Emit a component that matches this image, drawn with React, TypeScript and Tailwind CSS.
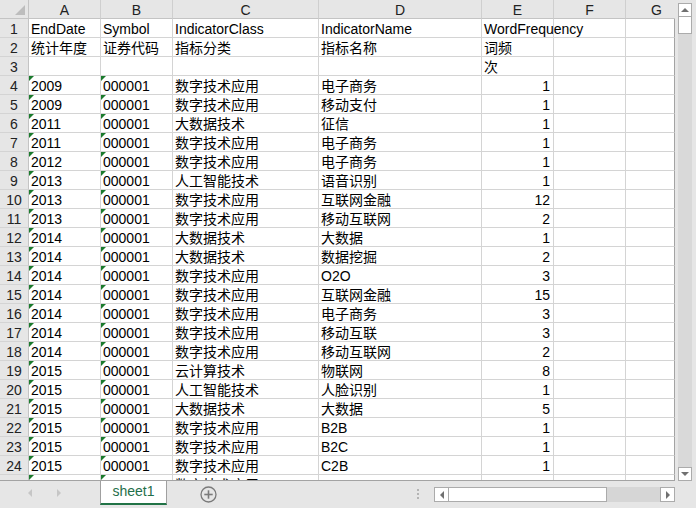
import React from "react";

type Row = [string, string, string, string, string];

const rows: Row[] = [
  ["EndDate", "Symbol", "IndicatorClass", "IndicatorName", "WordFrequency"],
  ["统计年度", "证券代码", "指标分类", "指标名称", "词频"],
  ["", "", "", "", "次"],
  ["2009", "000001", "数字技术应用", "电子商务", "1"],
  ["2009", "000001", "数字技术应用", "移动支付", "1"],
  ["2011", "000001", "大数据技术", "征信", "1"],
  ["2011", "000001", "数字技术应用", "电子商务", "1"],
  ["2012", "000001", "数字技术应用", "电子商务", "1"],
  ["2013", "000001", "人工智能技术", "语音识别", "1"],
  ["2013", "000001", "数字技术应用", "互联网金融", "12"],
  ["2013", "000001", "数字技术应用", "移动互联网", "2"],
  ["2014", "000001", "大数据技术", "大数据", "1"],
  ["2014", "000001", "大数据技术", "数据挖掘", "2"],
  ["2014", "000001", "数字技术应用", "O2O", "3"],
  ["2014", "000001", "数字技术应用", "互联网金融", "15"],
  ["2014", "000001", "数字技术应用", "电子商务", "3"],
  ["2014", "000001", "数字技术应用", "移动互联", "3"],
  ["2014", "000001", "数字技术应用", "移动互联网", "2"],
  ["2015", "000001", "云计算技术", "物联网", "8"],
  ["2015", "000001", "人工智能技术", "人脸识别", "1"],
  ["2015", "000001", "大数据技术", "大数据", "5"],
  ["2015", "000001", "数字技术应用", "B2B", "1"],
  ["2015", "000001", "数字技术应用", "B2C", "1"],
  ["2015", "000001", "数字技术应用", "C2B", "1"],
  ["2015", "000001", "数字技术应用", "C2C", "1"],
];

const colW = [
  "w-[72px]",
  "w-[72px]",
  "w-[146px]",
  "w-[163px]",
  "w-[72px]",
  "w-[72px]",
  "w-[49px]",
];
const letters = ["A", "B", "C", "D", "E", "F", "G"];

function Tri() {
  return (
    <span className="absolute left-0 top-0 h-0 w-0 border-t-[5px] border-r-[5px] border-t-[#1a7a2c] border-r-transparent" />
  );
}

function HeaderRow() {
  return (
    <div className="flex h-[19px] shrink-0">
      <div className="flex h-[19px] w-[29px] shrink-0 items-end justify-end border-r border-b border-r-[#c4c4c4] border-b-[#c4c4c4] bg-[#e6e6e6] pr-[3px] pb-[3px]">
        <svg width="10" height="10" viewBox="0 0 10 10">
          <polygon points="0,10 10,10 10,0" fill="#bdbdbd" />
        </svg>
      </div>
      {letters.map((l, i) => (
        <div
          key={l}
          className={`${colW[i]} h-[19px] shrink-0 border-b border-b-[#c4c4c4] bg-[#e6e6e6] pt-[2px] text-center leading-[17px] text-[#222] ${
            i === 6 ? "border-r-0 pl-[12px]" : "border-r border-r-[#cfcfcf]"
          }`}
        >
          {l}
        </div>
      ))}
    </div>
  );
}

function DataRow({ r, idx }: { r: Row; idx: number }) {
  const n = idx + 1;
  const tri = n >= 4;
  const numRight = n >= 4;
  return (
    <div className="flex h-[19px] shrink-0">
      <div className="h-[19px] w-[29px] shrink-0 border-r border-b border-r-[#c4c4c4] border-b-[#d4d4d4] bg-[#e6e6e6] pt-[2px] text-center leading-[17px] text-[#222]">
        {n}
      </div>
      {[0, 1, 2, 3, 4, 5, 6].map((c) => {
        const text = c < 5 ? r[c] : "";
        const right = c === 4 && numRight;
        return (
          <div
            key={c}
            className={`relative ${colW[c]} h-[19px] shrink-0 whitespace-nowrap border-b border-b-[#d4d4d4] pt-[2px] leading-[17px] text-black ${
              right ? "pr-[3px] text-right" : "pl-[2px]"
            } ${c === 6 ? "border-r border-r-[#a3a3a3]" : "border-r border-r-[#d4d4d4]"}`}
          >
            {tri && (c === 0 || c === 1) && <Tri />}
            {text}
          </div>
        );
      })}
    </div>
  );
}

function VScroll() {
  return (
    <div className="flex h-[481px] w-[21px] shrink-0 flex-col bg-[#e6e6e6] pt-[3px] pr-[4px] pl-[3px]">
      <div className="flex flex-1 flex-col bg-[#d9d9d9]">
        <div className="flex h-[14px] items-center justify-center border border-[#ababab] bg-white">
          <span className="h-0 w-0 border-r-[4px] border-b-[4px] border-l-[4px] border-r-transparent border-b-[#707070] border-l-transparent" />
        </div>
        <div className="h-[17px] border border-t-0 border-[#ababab] bg-white" />
        <div className="flex-1" />
        <div className="flex h-[14px] items-center justify-center border border-[#ababab] bg-white">
          <span className="h-0 w-0 border-t-[4px] border-r-[4px] border-l-[4px] border-t-[#707070] border-r-transparent border-l-transparent" />
        </div>
      </div>
    </div>
  );
}

function TabBar() {
  return (
    <div className="flex h-[27px] w-[696px] items-start bg-[#e6e6e6]">
      <div className="flex h-[24px] w-[100px] shrink-0 items-center pl-[28px]">
        <span className="h-0 w-0 border-t-[4px] border-r-[4px] border-b-[4px] border-t-transparent border-r-[#c6c6c6] border-b-transparent" />
        <span className="ml-[25px] h-0 w-0 border-t-[4px] border-b-[4px] border-l-[4px] border-t-transparent border-b-transparent border-l-[#c6c6c6]" />
      </div>
      <div className="flex h-[24px] w-[67px] shrink-0 items-center justify-center border-r border-b-[2px] border-l border-r-[#a0a0a0] border-b-[#217346] border-l-[#a0a0a0] bg-white pb-[1px] text-[14px] text-[#1f6f4a]">
        sheet1
      </div>
      <div className="flex h-[26px] w-[82px] shrink-0 items-center pl-[33px]">
        <svg width="17" height="17" viewBox="0 0 17 17">
          <circle cx="8.5" cy="8.5" r="7.5" fill="none" stroke="#7a7a7a" strokeWidth="1.3" />
          <line x1="8.5" y1="4.3" x2="8.5" y2="12.7" stroke="#7a7a7a" strokeWidth="1.6" />
          <line x1="4.3" y1="8.5" x2="12.7" y2="8.5" stroke="#7a7a7a" strokeWidth="1.6" />
        </svg>
      </div>
      <div className="flex w-[185px] shrink-0 justify-end pt-[8px] pr-[15px]">
        <div className="flex flex-col gap-[2px]">
          <span className="h-[2px] w-[2px] bg-[#b4b4b4]" />
          <span className="h-[2px] w-[2px] bg-[#b4b4b4]" />
          <span className="h-[2px] w-[2px] bg-[#b4b4b4]" />
        </div>
      </div>
      <div className="mt-[6px] flex h-[15px] w-[241px] shrink-0">
        <div className="flex h-[15px] w-[15px] items-center justify-center border border-[#ababab] bg-white">
          <span className="h-0 w-0 border-t-[4px] border-r-[4px] border-b-[4px] border-t-transparent border-r-[#707070] border-b-transparent" />
        </div>
        <div className="h-[15px] w-[158px] border border-l-0 border-[#ababab] bg-white" />
        <div className="h-[15px] flex-1 bg-[#d6d6d6]" />
        <div className="flex h-[15px] w-[15px] items-center justify-center border border-[#ababab] bg-white">
          <span className="h-0 w-0 border-t-[4px] border-b-[4px] border-l-[4px] border-t-transparent border-b-transparent border-l-[#707070]" />
        </div>
      </div>
    </div>
  );
}

export default function App() {
  return (
    <div className="flex h-[508px] w-[696px] flex-col overflow-hidden bg-[#e6e6e6] font-['Liberation_Sans','Noto_Sans_CJK_SC',sans-serif] text-[14px]">
      <div className="flex h-[481px] shrink-0">
        <div className="flex h-[481px] w-[675px] shrink-0 flex-col overflow-hidden border-b border-b-[#a3a3a3] bg-white">
          <HeaderRow />
          {rows.map((r, i) => (
            <DataRow key={i} r={r} idx={i} />
          ))}
        </div>
        <VScroll />
      </div>
      <TabBar />
    </div>
  );
}
